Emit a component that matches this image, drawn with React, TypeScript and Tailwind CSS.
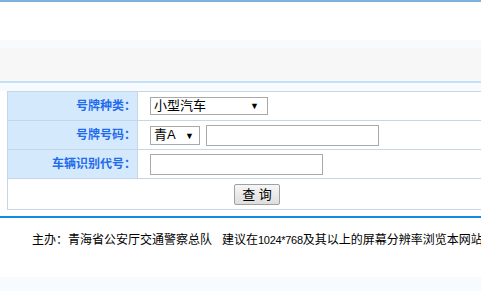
import React from 'react';

const font = { fontFamily: '"Liberation Sans", "Noto Sans CJK SC", sans-serif' };

const Label: React.FC<{ text: string }> = ({ text }) => (
    <div className="w-[130px] border-r border-[#c6d6e6] bg-[#d5e9fd] flex items-center justify-end pr-[1px] text-[12px] font-bold text-[#1f6cec]">
        {text}
    </div>
);

const FakeSelect: React.FC<{ value: string; width: string }> = ({ value, width }) => (
    <div className={`relative ${width} h-[18px] border border-[#a9a9a9] bg-white flex items-center pl-[3px] text-[13px] text-black`}>
        <span>{value}</span>
        <span className="absolute right-[8px] top-[3px] text-[9px] leading-[10px]">▼</span>
    </div>
);

const App: React.FC = () => {
    return (
        <div className="w-[481px] h-[291px] overflow-hidden bg-white" style={font}>
            <div className="w-[1000px]">
                {/* Header */}
                <div className="h-[2px] bg-[#80b0e0]"></div>
                <div className="h-[38px] bg-white"></div>
                <div className="h-[8px] bg-[#f7fbfe]"></div>
                <div className="h-[33px] bg-[#f7f7f7]"></div>
                <div className="h-[2px] bg-[#c2e0f8]"></div>
                <div className="h-[8px] bg-[#f7fbfe]"></div>

                {/* Query form */}
                <div className="ml-[7px] w-[500px] border border-[#c6d6e6]">
                    <div className="flex h-[29px] border-b border-[#c6d6e6]">
                        <Label text="号牌种类：" />
                        <div className="flex-1 flex items-center pl-3">
                            <FakeSelect value="小型汽车" width="w-[118px]" />
                        </div>
                    </div>
                    <div className="flex h-[29px] border-b border-[#c6d6e6]">
                        <Label text="号牌号码：" />
                        <div className="flex-1 flex items-center pl-3 gap-[6px]">
                            <div className="relative w-[50px] h-[19px] border border-[#a9a9a9] bg-white flex items-center pl-[3px] text-[13px] text-black">
                                <span>青A</span>
                                <span className="absolute right-[5px] top-[4px] text-[9px] leading-[10px]">▼</span>
                            </div>
                            <input className="w-[173px] h-[21px] border border-[#a9a9a9] bg-white outline-none" />
                        </div>
                    </div>
                    <div className="flex h-[29px] border-b border-[#c6d6e6]">
                        <Label text="车辆识别代号：" />
                        <div className="flex-1 flex items-center pl-3">
                            <input className="w-[173px] h-[21px] border border-[#a9a9a9] bg-white outline-none" />
                        </div>
                    </div>
                    <div className="h-[30px] flex items-center justify-center">
                        <button className="w-[46px] h-[21px] border border-[#a0a0a0] rounded-[2px] bg-gradient-to-b from-[#f6f6f6] to-[#dedede] text-[13px] text-black leading-none">
                            查 询
                        </button>
                    </div>
                </div>

                {/* Footer */}
                <div className="h-[6px]"></div>
                <div className="h-[2px] bg-[#118ce4]"></div>
                <div className="h-[59px] pt-[16px] pl-[32px] text-[12px] leading-[12px] text-black whitespace-nowrap">
                    <span>主办：青海省公安厅交通警察总队</span>
                    <span className="ml-[10px]">建议在</span>
                    <span className="text-[11px] tracking-[-0.3px]">1024*768</span>
                    <span>及其以上的屏幕分辨率浏览本网站</span>
                </div>
                <div className="h-[14px] bg-[#f7fbfe]"></div>
            </div>
        </div>
    );
};

export default App;
